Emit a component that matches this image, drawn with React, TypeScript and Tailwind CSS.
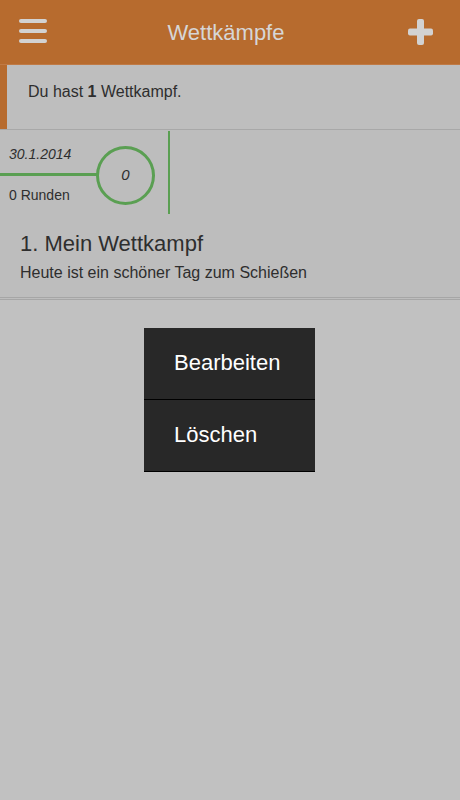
const font = { fontFamily: '"Liberation Sans", Arial, sans-serif' }

export default function App() {
  return (
    <div
      className="flex min-h-[800px] w-[460px] flex-col bg-[#c1c1c1] text-[#2e2e2e]"
      style={font}
    >
      <header className="flex h-[65px] items-center justify-between border-b border-[#c07a45] bg-[#b76b2e] pl-[19px] pr-[26px]">
        <svg width="29" height="25" viewBox="0 0 29 25" className="mt-[-1px]">
          <rect x="0" y="0" width="28" height="4" rx="2" fill="#d2d2d2" />
          <rect x="0" y="10" width="28" height="4" rx="2" fill="#d2d2d2" />
          <rect x="0" y="20" width="28" height="4" rx="2" fill="#d2d2d2" />
        </svg>
        <h1 className="ml-[-4px] text-[22px] text-[#d6d6d6]">Wettkämpfe</h1>
        <svg width="26" height="26" viewBox="0 0 26 26">
          <rect x="9" y="0" width="7" height="26" rx="2" fill="#d2d2d2" />
          <rect x="0" y="9.5" width="25" height="7" rx="2" fill="#d2d2d2" />
        </svg>
      </header>

      <section className="flex h-[65px] border-b border-[#a8a8a8] bg-[#bebebe]">
        <div className="w-[7px] bg-[#b76b2e]" />
        <p className="pl-[21px] pt-[15px] text-[16px]">
          Du hast <b>1</b> Wettkampf.
        </p>
      </section>

      <section className="border-b-[3px] border-double border-[#a6a6a6] bg-[#bdbdbd] pb-[15px] pt-px">
        <div className="flex h-[83px]">
          <div className="relative w-[168px]">
            <p className="absolute left-[9px] top-[13px] text-[14px] italic">30.1.2014</p>
            <p className="absolute left-[9px] top-[54px] text-[14px]">0 Runden</p>
            <div className="absolute left-0 top-[42px] h-[3px] w-[97px] bg-[#5a9f52]" />
            <div className="absolute left-[96px] top-[15px] flex h-[59px] w-[59px] items-center justify-center rounded-full border-[3px] border-[#5a9f52] text-[15px] italic">
              0
            </div>
          </div>
          <div className="w-[2px] bg-[#5a9f52]" />
        </div>
        <h2 className="mt-[17px] pl-[20px] text-[22px] leading-[26px]">1. Mein Wettkampf</h2>
        <p className="mt-[7px] pl-[20px] text-[16px] leading-[18px]">
          Heute ist ein schöner Tag zum Schießen
        </p>
      </section>

      <div className="flex justify-center pt-[28px]">
        <div className="ml-[-1px] w-[171px] bg-[#282828] text-[22px] text-white">
          <div className="flex h-[72px] items-center border-b border-black pb-[2px] pl-[30px]">Bearbeiten</div>
          <div className="flex h-[72px] items-center border-b border-black pb-[2px] pl-[30px]">Löschen</div>
        </div>
      </div>
    </div>
  )
}
